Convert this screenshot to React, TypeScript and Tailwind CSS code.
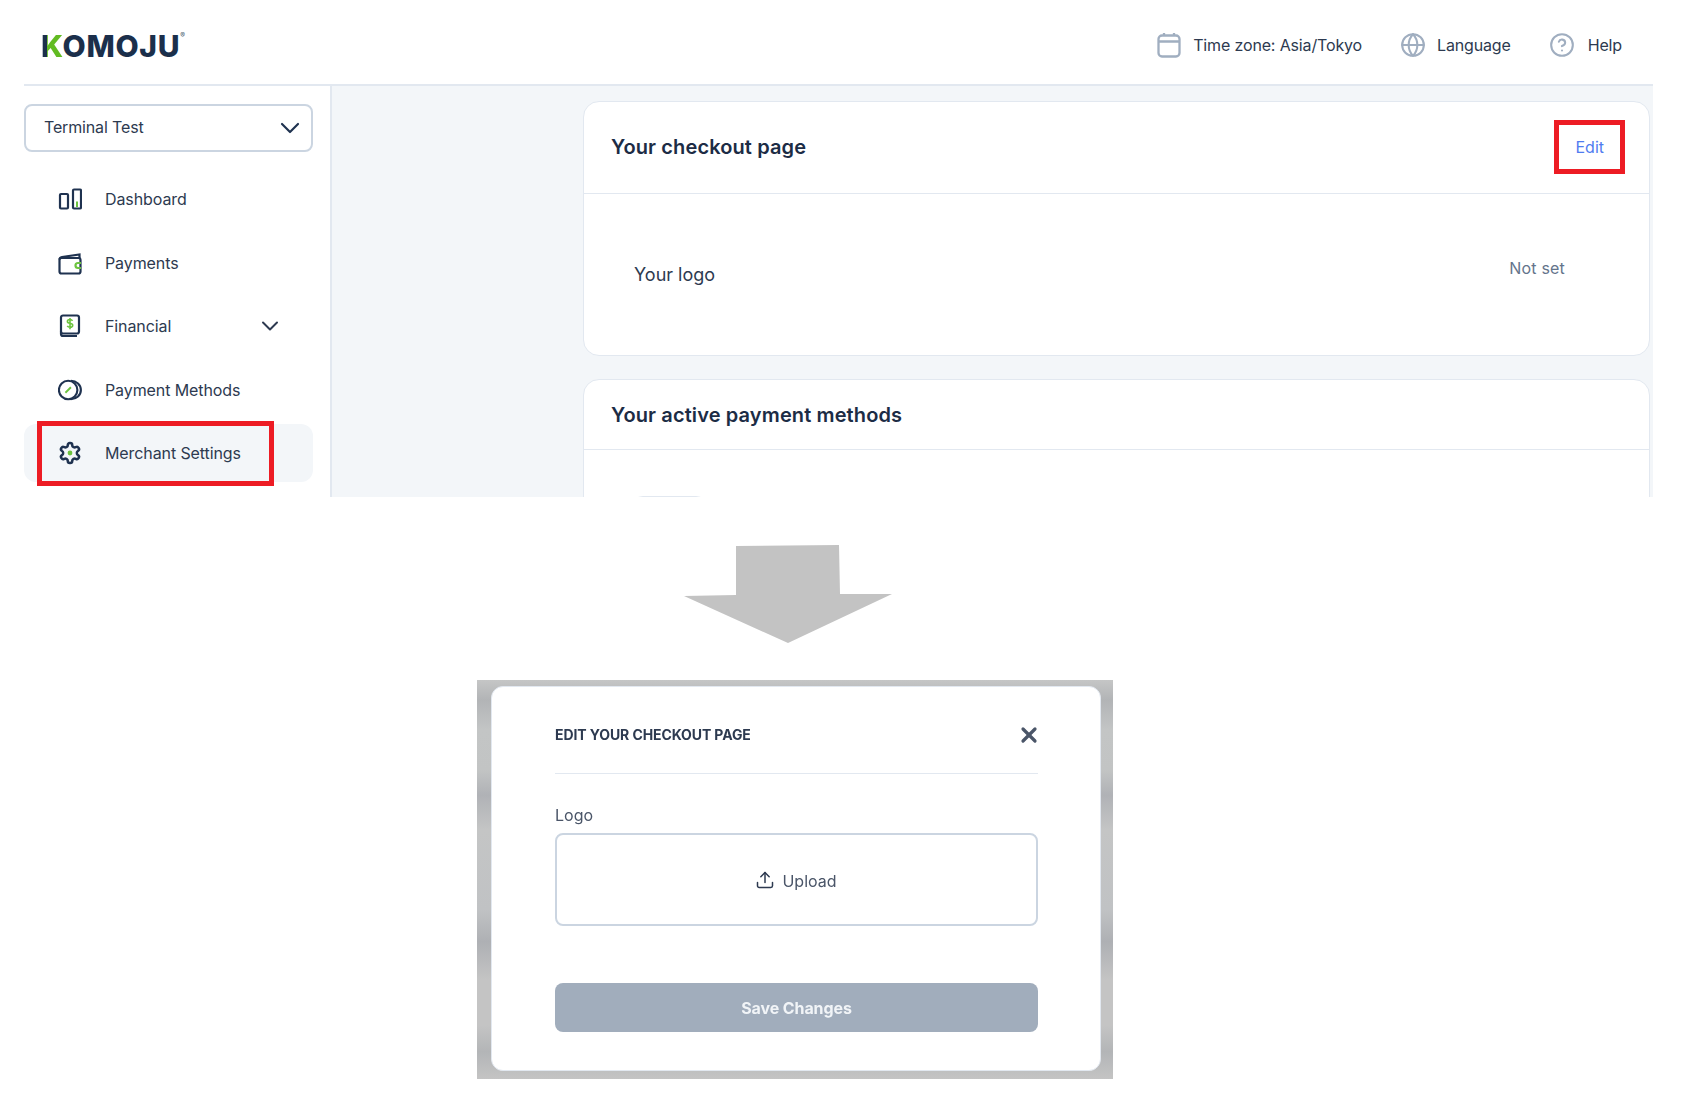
import { ChevronDown, CircleHelp, Globe, Upload, X } from "lucide-react";
import type { ReactNode } from "react";

const NAVY = "#1f3250";
const GREEN = "#6cc33f";

function DashboardIcon() {
  return (
    <svg width="24" height="24" viewBox="0 0 24 24" fill="none" stroke={NAVY} strokeWidth="2.2">
      <rect x="2" y="7" width="8" height="14.5" rx="1" />
      <rect x="15" y="2.5" width="8" height="19" rx="1" />
      <path d="M19 14.5v5.5" stroke={GREEN} strokeWidth="2" />
    </svg>
  );
}

function WalletIcon() {
  return (
    <svg width="24" height="24" viewBox="0 0 24 24" fill="none" stroke={NAVY} strokeWidth="2.2">
      <path d="M1.5 8.5C1.5 7 2.5 6.3 4 6L21.5 3.5V7" />
      <rect x="1.5" y="7" width="21" height="15.5" rx="2" />
      <path d="M23 12h-3a2.5 2.5 0 0 0 0 5h3" stroke={GREEN} strokeWidth="2.2" />
    </svg>
  );
}

function FinancialIcon() {
  return (
    <svg width="24" height="24" viewBox="0 0 24 24" fill="none" stroke={NAVY} strokeWidth="2.2">
      <path d="M5 1.5h14a2 2 0 0 1 2 2v14a2 2 0 0 1-2 2H5a2 2 0 0 1-2-2v-14a2 2 0 0 1 2-2z" />
      <path d="M3 17.5v2.5a2 2 0 0 0 2 2h14" />
      <path
        d="M14.5 6.8c-.5-.9-1.4-1.3-2.5-1.3-1.5 0-2.6.7-2.6 1.9 0 2.6 5.3 1.2 5.3 3.9 0 1.2-1.2 2-2.7 2-1.2 0-2.2-.5-2.7-1.4M12 4v11.2"
        stroke={GREEN}
        strokeWidth="1.6"
      />
    </svg>
  );
}

function CoinsIcon() {
  return (
    <svg width="26" height="24" viewBox="0 0 26 24" fill="none" stroke={NAVY} strokeWidth="2.3">
      <circle cx="11" cy="12" r="10" />
      <path d="M14 2c6 0 10.8 4.5 10.8 10S20 22 14 22" />
      <path d="M8 15l6-6" stroke={GREEN} strokeWidth="2" />
    </svg>
  );
}

function GearIcon() {
  return (
    <svg width="24" height="24" viewBox="0 0 24 24" fill="none" stroke={NAVY} strokeWidth="2.5">
      <path d="M12.22 2h-.44a2 2 0 0 0-2 2v.18a2 2 0 0 1-1 1.73l-.43.25a2 2 0 0 1-2 0l-.15-.08a2 2 0 0 0-2.73.73l-.22.38a2 2 0 0 0 .73 2.73l.15.1a2 2 0 0 1 1 1.72v.51a2 2 0 0 1-1 1.74l-.15.09a2 2 0 0 0-.73 2.73l.22.38a2 2 0 0 0 2.73.73l.15-.08a2 2 0 0 1 2 0l.43.25a2 2 0 0 1 1 1.73V20a2 2 0 0 0 2 2h.44a2 2 0 0 0 2-2v-.18a2 2 0 0 1 1-1.73l.43-.25a2 2 0 0 1 2 0l.15.08a2 2 0 0 0 2.73-.73l.22-.39a2 2 0 0 0-.73-2.73l-.15-.08a2 2 0 0 1-1-1.74v-.5a2 2 0 0 1 1-1.74l.15-.09a2 2 0 0 0 .73-2.73l-.22-.38a2 2 0 0 0-2.73-.73l-.15.08a2 2 0 0 1-2 0l-.43-.25a2 2 0 0 1-1-1.73V4a2 2 0 0 0-2-2z" />
      <circle cx="12" cy="12" r="2.4" fill={GREEN} stroke="none" />
    </svg>
  );
}

function CalendarIcon() {
  return (
    <svg width="24" height="26" viewBox="0 0 24 26" fill="none" stroke="#a0aec0" strokeWidth="2.3">
      <rect x="1.5" y="3.5" width="21" height="21" rx="3.5" />
      <path d="M1.5 9.5h21M7 1v3M17 1v3" />
    </svg>
  );
}

function TopLink({ icon, label, gap }: { icon: ReactNode; label: string; gap: string }) {
  return (
    <div className={`flex items-center ${gap}`}>
      {icon}
      <span className="text-[16px] tracking-[-0.15px] text-[#2d3a50]">{label}</span>
    </div>
  );
}

function NavRow({ icon, label, active, chevron }: { icon: ReactNode; label: string; active?: boolean; chevron?: boolean }) {
  return (
    <div className={`relative flex h-[58px] items-center rounded-xl pl-[34px] pr-[29px] ${active ? "bg-[#f3f6f9]" : ""}`}>
      <span className="flex w-[24px] justify-center">{icon}</span>
      <span className="ml-[23px] flex-1 text-[16px] tracking-[-0.1px] text-[#2d3a50]">{label}</span>
      {chevron && <ChevronDown size={28} strokeWidth={1.7} className="text-[#2d3a50]" />}
      {active && <span className="absolute -bottom-[4px] -top-[3px] left-[13px] right-[39px] border-[5px] border-[#ed1c24]" />}
    </div>
  );
}

function Sidebar() {
  return (
    <aside className="w-[308px] shrink-0 border-r-2 border-[#e2e8f0] pr-[18px] pt-[18px]">
      <div className="flex h-[48px] w-[289px] items-center justify-between rounded-lg border-2 border-[#cbd5e1] pl-[18px] pr-[5px]">
        <span className="mb-[2px] text-[16px] tracking-[-0.15px] text-[#2d3a50]">Terminal Test</span>
        <ChevronDown size={32} strokeWidth={1.6} className="text-[#1f3250]" />
      </div>
      <nav className="mt-[18px] flex w-[289px] flex-col gap-[5.5px]">
        <NavRow icon={<DashboardIcon />} label="Dashboard" />
        <NavRow icon={<WalletIcon />} label="Payments" />
        <NavRow icon={<FinancialIcon />} label="Financial" chevron />
        <NavRow icon={<CoinsIcon />} label="Payment Methods" />
        <NavRow icon={<GearIcon />} label="Merchant Settings" active />
      </nav>
    </aside>
  );
}

function Dashboard() {
  return (
    <div className="ml-[24px] h-[497px] w-[1629px] overflow-hidden">
      <header className="flex h-[86px] items-center justify-between border-b-2 border-[#e2e8f0] pl-[17px] pr-[31px] pt-[5px]">
        <div className="mt-[2px] flex items-start">
          <span className="text-[30px] leading-none font-extrabold tracking-[0.7px] text-[#1b2f4b]">
            <span className="bg-[linear-gradient(90deg,#1b2f4b_27%,#62bb22_27%)] bg-clip-text text-transparent">K</span>
            OMOJU
          </span>
          <span className="mt-[1px] text-[7px] leading-none text-[#4a5a70]">®</span>
        </div>
        <div className="flex items-center gap-[38px]">
          <TopLink icon={<CalendarIcon />} label="Time zone: Asia/Tokyo" gap="gap-[12px]" />
          <TopLink icon={<Globe size={26} strokeWidth={1.9} className="text-[#a0aec0]" />} label="Language" gap="gap-[11px]" />
          <TopLink icon={<CircleHelp size={26} strokeWidth={1.9} className="text-[#a0aec0]" />} label="Help" gap="gap-[13px]" />
        </div>
      </header>
      <div className="flex h-[411px]">
        <Sidebar />
        <main className="flex-1 bg-[#f3f6f9] pl-[251px] pr-[3px] pt-[15px]">
          <section className="h-[255px] rounded-2xl border border-[#e2e8f0] bg-white">
            <div className="flex h-[92px] items-center justify-between border-b border-[#e2e8f0] pb-[2px] pl-[27px] pr-[45px]">
              <h2 className="text-[20px] font-semibold tracking-[0.12px] text-[#1c2c45]">Your checkout page</h2>
              <span className="relative text-[16px] text-[#4f7cf0]">
                Edit
                <span className="absolute -inset-x-[21px] -inset-y-[15px] border-[5px] border-[#ed1c24]" />
              </span>
            </div>
            <div className="flex h-[162px] items-center justify-between pl-[50px] pr-[84px]">
              <span className="mb-[2px] text-[18px] text-[#2d3a50]">Your logo</span>
              <span className="mb-[15px] text-[16px] tracking-[0.2px] text-[#64748b]">Not set</span>
            </div>
          </section>
          <section className="mt-[23px] rounded-t-2xl border border-[#e2e8f0] bg-white">
            <div className="flex h-[70px] items-center border-b border-[#e2e8f0] pl-[27px]">
              <h2 className="text-[20px] font-semibold tracking-[0.12px] text-[#1c2c45]">Your active payment methods</h2>
            </div>
            <div className="pl-[47px] pt-[46px]">
              <div className="h-[50px] w-[77px] rounded-xl border border-[#e2e8f0]" />
            </div>
          </section>
        </main>
      </div>
    </div>
  );
}

function EditModal() {
  return (
    <div className="ml-[477px] mt-[37px] w-[636px] bg-[linear-gradient(180deg,#c5c6c6_0px,#b2b4b6_20px,#c3c5c5_50px,#c2c4c4_90px,#b0b2b6_115px,#c4c5c5_150px,#c0c2c4_230px,#aeb0b4_262px,#c4c4c4_300px,#c4c4c4_345px,#b3b5b7_372px,#c4c4c4_399px)] pb-[8px] pl-[14px] pr-[12px] pt-[6px]">
      <div className="rounded-xl border border-[#e2e8f0] bg-white pb-[38px] pl-[63px] pr-[62px] blur-[0.5px]">
        <div className="flex h-[87px] items-center justify-between border-b border-[#e2e8f0] pt-[9px]">
          <h3 className="text-[14px] font-bold tracking-[-0.1px] text-[#2d3a50] uppercase">Edit your checkout page</h3>
          <X size={24} strokeWidth={3.2} className="mr-[-3px] text-[#4a5568]" />
        </div>
        <div className="mt-[29px] text-[16px] text-[#4a5568]">Logo</div>
        <div className="mt-[6px] flex h-[93px] items-center justify-center gap-[7px] rounded-lg border-2 border-[#cbd5e1] pr-[1px] pt-[2px] text-[16px] text-[#4a5568]">
          <Upload size={20} strokeWidth={1.8} className="mb-[2px] text-[#2d3a50]" />
          Upload
        </div>
        <button className="mt-[57px] h-[49px] w-full rounded-lg bg-[#a1adbc] text-[16px] font-bold tracking-[-0.1px] text-[#f1f4f7]">
          Save Changes
        </button>
      </div>
    </div>
  );
}

export default function App() {
  return (
    <div className="h-[1108px] w-[1684px] overflow-hidden bg-white" style={{ fontFamily: "Inter, sans-serif" }}>
      <Dashboard />
      <svg className="ml-[684px] mt-[48px] block" width="208" height="98" viewBox="0 0 208 98">
        <polygon points="0,51 52,50 52,1 155,0 156,49 208,49 104,98" fill="#c3c3c3" />
      </svg>
      <EditModal />
    </div>
  );
}
